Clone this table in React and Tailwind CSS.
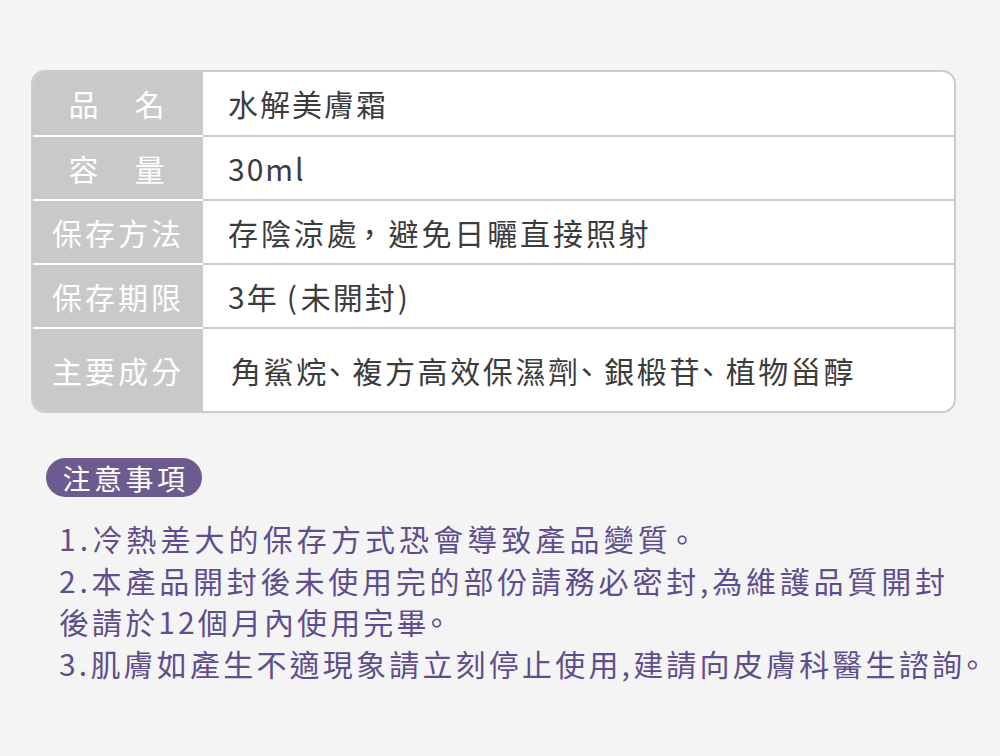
const Dun = () => <span className="-ml-[9px]">、</span>
const Stop = ({ shift }) => <span className={shift}>。</span>

const rows = [
    { label: '品　名', value: '水解美膚霜' },
    { label: '容　量', value: '30ml' },
    { label: '保存方法', value: <>存陰涼處<span className="-ml-[5px] mr-[1px]">，</span>避免日曬直接照射</>, track: 'tracking-[2.9px]' },
    { label: '保存期限', value: <>3年<span className="ml-[8px] mr-[2px]">(</span>未開封<span className="ml-[1px]">)</span></> },
    { label: '主要成分', value: <>角鯊烷<Dun />複方高效保濕劑<Dun />銀椴苷<Dun />植物甾醇</>, tall: true },
]

const App = () => {
    return (
        <div
            className="w-[1000px] h-[756px] bg-[#f5f4f5] pt-[70px] pl-[31px] pr-[44px]"
            style={{ fontFamily: '"Noto Sans CJK TC", "Noto Sans", sans-serif' }}
        >
            <div className="rounded-[14px] border-2 border-[#cbcbcb] overflow-hidden bg-white">
                {rows.map((row, i) => (
                    <div key={i} className={`flex ${row.tall ? 'h-[84px]' : i === 0 ? 'h-[63px]' : 'h-[64px]'}`}>
                        <div className={`w-[170px] shrink-0 bg-[#c9c9c9] flex items-center justify-center text-white text-[30px] tracking-[3px] ${i > 0 ? 'border-t-2 border-white' : ''}`}>
                            {row.label}
                        </div>
                        <div className={`flex-1 flex items-center text-[#3c3c3c] text-[30px] ${i > 0 ? 'border-t-2 border-[#cbcbcb]' : ''} ${row.tall ? 'pl-[28px] tracking-[2.6px]' : `pl-[25px] ${row.track || 'tracking-[2px]'}`}`}>
                            {row.value}
                        </div>
                    </div>
                ))}
            </div>

            <div className="mt-[45px] pl-[15px]">
                <div className="inline-flex items-center justify-center h-[39px] w-[156px] rounded-full bg-[#6b5b8f] text-white text-[28px] tracking-[3.5px] pl-[3px]">
                    注意事項
                </div>
            </div>

            <div className="mt-[21px] pl-[28px] text-[#5e4f8c] text-[30px] leading-[41.5px] whitespace-nowrap">
                <div className="tracking-[4.1px]">1.冷熱差大的保存方式恐會導致產品變質<Stop shift="-ml-[5px]" /></div>
                <div className="tracking-[3.8px]">2.本產品開封後未使用完的部份請務必密封,為維護品質開封</div>
                <div className="tracking-[3.1px]">後請於12個月內使用完畢<Stop shift="-ml-[8px]" /></div>
                <div className="tracking-[3.2px]">3.肌膚如產生不適現象請立刻停止使用,建請向皮膚科醫生諮詢<Stop shift="-ml-[8px]" /></div>
            </div>
        </div>
    )
}

export default App
